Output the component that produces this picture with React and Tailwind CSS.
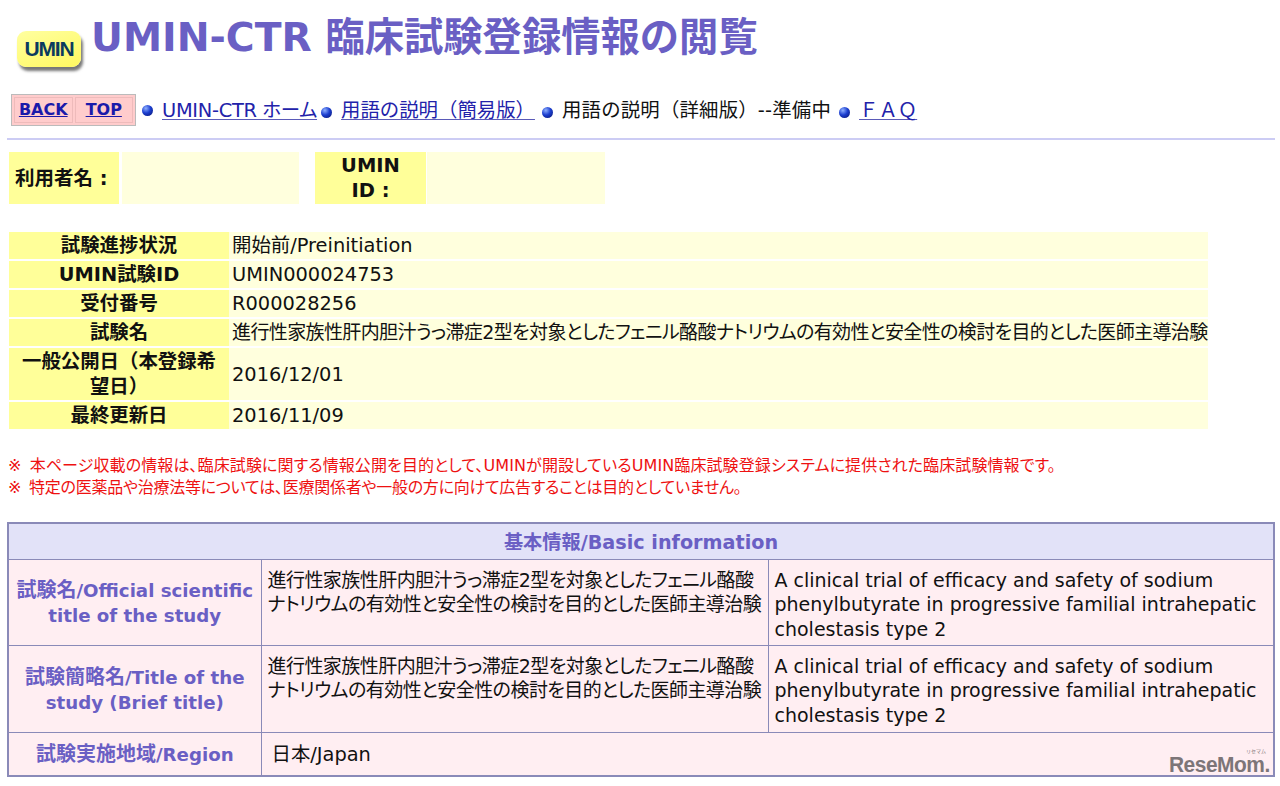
const FONT = "font-['DejaVu_Sans','Noto_Sans_CJK_JP',sans-serif]";
const PALT = "[font-feature-settings:'palt']";

const Bullet = () => (
  <span className="inline-block align-[-1px] w-[11px] h-[11px] rounded-full bg-[radial-gradient(circle_at_35%_30%,#8fb0ff,#1c3fd0_45%,#06106a)] shrink-0" />
);

const Link = ({ children, className = '' }) => (
  <a href="#" className={`text-[#2222aa] underline underline-offset-2 decoration-[#5a5ab8] ${className}`}>{children}</a>
);

const INFO = [
  ['試験進捗状況', '開始前/Preinitiation'],
  ['UMIN試験ID', 'UMIN000024753'],
  ['受付番号', 'R000028256'],
  ['試験名', '進行性家族性肝内胆汁うっ滞症2型を対象としたフェニル酪酸ナトリウムの有効性と安全性の検討を目的とした医師主導治験'],
  ['一般公開日（本登録希望日）', '2016/12/01'],
  ['最終更新日', '2016/11/09'],
];

const labelCls = 'border border-[#8a8ab8] px-1 pt-[2px] text-center font-bold text-[#6a5fc4] text-[18.2px] leading-[25px] whitespace-nowrap';
const cellCls = 'border border-[#8a8ab8] px-[6px] pt-[8px] pb-[3px] align-top leading-[24.5px] text-[#111]';

// CJK part of a label runs a little larger than the latin
const J = ({ children }) => <span className="text-[20px]">{children}</span>;

const Title = () => (
  <>
    <td className={`${cellCls} ${PALT} text-[19px] tracking-[-0.55px] whitespace-nowrap`}>
      進行性家族性肝内胆汁うっ滞症2型を対象としたフェニル酪酸<br />ナトリウムの有効性と安全性の検討を目的とした医師主導治験
    </td>
    <td className={`${cellCls} text-[19px]`}>
      A clinical trial of efficacy and safety of sodium phenylbutyrate in progressive familial intrahepatic cholestasis type 2
    </td>
  </>
);

export default function App() {
  return (
    <div className={`relative w-[1280px] h-[786px] overflow-hidden bg-white pl-[7px] pr-[5px] ${FONT}`}>
      {/* header */}
      <div className="flex items-start h-[90px] pl-[10px] pt-[15px]">
        <div className="mt-[16px] w-[64px] h-[36px] rounded-[9px] bg-[linear-gradient(160deg,#ffffa0,#fff860)] shadow-[2px_4px_3px_#777] flex items-center justify-center">
          <span className="font-['Liberation_Sans',sans-serif] font-bold text-[21px] tracking-[-1.2px] text-[#0b3a5e]">UMIN</span>
        </div>
        <h1 className="ml-[10px] text-[39.3px] leading-[46px] font-bold text-[#6a5fc4] whitespace-nowrap">UMIN-CTR 臨床試験登録情報の閲覧</h1>
      </div>

      {/* nav */}
      <div className="flex items-center h-[32px] mt-[4px] pl-[4px] text-[19.4px] text-[#111] whitespace-nowrap">
        <div className="flex h-[32px] w-[125px] p-[2px] gap-[2px] bg-[#ffcccc] border border-[#bbb] mr-[6px]">
          <a href="#" className="flex-1 flex items-center justify-center border border-[#eebbbb] text-[#1a1aaa] font-bold text-[16px] underline">BACK</a>
          <a href="#" className="flex-1 flex items-center justify-center border border-[#eebbbb] text-[#1a1aaa] font-bold text-[16px] underline">TOP</a>
        </div>
        <div className="flex items-center mt-[2px]">
          <Bullet />
          <Link className={`ml-[9px] tracking-[-0.3px] ${PALT}`}>UMIN-CTR ホーム</Link>
          <span className="ml-[4px]"><Bullet /></span>
          <Link className="ml-[9px]">用語の説明（簡易版）</Link>
          <span className="ml-[7px]"><Bullet /></span>
          <span className="ml-[9px] tracking-[0.2px]">用語の説明（詳細版）--準備中</span>
          <span className="ml-[8px]"><Bullet /></span>
          <Link className="ml-[9px]">ＦＡＱ</Link>
        </div>
      </div>

      <hr className="mt-[12px] border-0 h-[2px] bg-[#ccccf4]" />

      {/* user */}
      <div className="flex mt-[12px] ml-[2px] h-[52px] text-[19.5px] leading-[25px] font-bold text-[#111]">
        <div className="w-[110px] bg-[#ffff99] flex items-center pl-[6px] whitespace-pre">利用者名 :</div>
        <div className="w-[177px] ml-[3px] bg-[#ffffdd]" />
        <div className="w-[111px] ml-[16px] bg-[#ffff99] flex items-center justify-center text-center">UMIN<br />ID :</div>
        <div className="w-[178px] ml-[1px] bg-[#ffffdd]" />
      </div>

      {/* study summary */}
      <table className="mt-[26px] ml-[2px] w-[1199px] table-fixed border-separate border-spacing-y-[2px] border-spacing-x-0 text-[19.4px] text-[#111]">
        <colgroup>
          <col className="w-[220px]" />
          <col />
        </colgroup>
        <tbody>
          {INFO.map(([k, v]) => (
            <tr key={k}>
              <td className="bg-[#ffff99] text-center font-bold leading-[25px] py-px px-[8px]">{k}</td>
              <td className={`bg-[#ffffdd] leading-[25px] py-px pl-[3px] whitespace-nowrap ${PALT} ${v.length > 40 ? 'text-[19px] tracking-[-0.62px]' : ''}`}>{v}</td>
            </tr>
          ))}
        </tbody>
      </table>

      {/* notes */}
      <div className={`mt-[24px] ml-px text-[16px] leading-[22px] text-[#ee1111] whitespace-nowrap ${PALT}`}>
        <p className="tracking-[0.1px]"><span className="mr-[3px]">※</span> 本ページ収載の情報は、臨床試験に関する情報公開を目的として、UMINが開設しているUMIN臨床試験登録システムに提供された臨床試験情報です。</p>
        <p className="tracking-[-0.25px]"><span className="mr-[3px]">※</span> 特定の医薬品や治療法等については、医療関係者や一般の方に向けて広告することは目的としていません。</p>
      </div>

      {/* basic information */}
      <table className="mt-[23px] w-[1268px] table-fixed border-collapse border-2 border-[#8a8ab8] bg-[#ffeef2]">
        <colgroup>
          <col className="w-[253px]" />
          <col className="w-[507px]" />
          <col />
        </colgroup>
        <tbody>
          <tr>
            <td colSpan={3} className="h-[36px] pt-[5px] border border-[#8a8ab8] bg-[#e2e2f8] text-center font-bold text-[#6a5fc4] text-[19.2px]">基本情報/Basic information</td>
          </tr>
          <tr className="h-[86px]">
            <td className={labelCls}><J>試験名</J>/Official scientific<br />title of the study</td>
            <Title />
          </tr>
          <tr className="h-[87px]">
            <td className={labelCls}><J>試験簡略名</J>/Title of the<br />study (Brief title)</td>
            <Title />
          </tr>
          <tr className="h-[44px]">
            <td className={labelCls}><J>試験実施地域</J>/Region</td>
            <td colSpan={2} className="border border-[#8a8ab8] px-[10px] pt-[2px] text-[19.4px] text-[#111]">日本/Japan</td>
          </tr>
        </tbody>
      </table>

      {/* watermark */}
      <div className="absolute left-[1169px] top-[746px] w-[100px] text-[#7d7578] leading-none">
        <div className="text-right text-[5px] h-[8px] pt-[3px] pr-[3px]">リセマム</div>
        <div className="font-['Liberation_Sans',sans-serif] font-bold text-[22px] tracking-[-0.5px] scale-x-95 origin-left whitespace-nowrap">ReseMom.</div>
      </div>
    </div>
  );
}
